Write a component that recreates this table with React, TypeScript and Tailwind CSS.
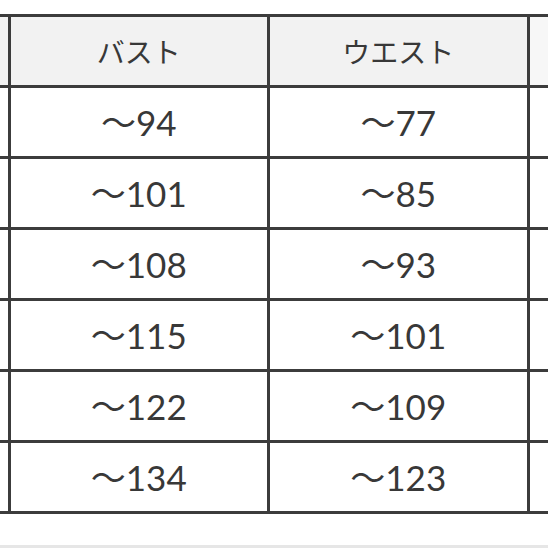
import React from "react";

const rows = [
  ["～94", "～77"],
  ["～101", "～85"],
  ["～108", "～93"],
  ["～115", "～101"],
  ["～122", "～109"],
  ["～134", "～123"],
];

const cell = "h-[71px] border-[3px] border-[#3c3c3c]";

export default function App() {
  return (
    <div
      className="w-[548px] h-[548px] bg-white overflow-hidden flex flex-col text-[#383838]"
      style={{ fontFamily: 'Lato, "Noto Sans CJK JP", sans-serif' }}
    >
      <div className="pt-[14px]">
        <table className="table-fixed border-collapse w-[1038px] -ml-[252px]">
          <colgroup>
            <col className="w-[259.5px]" />
            <col className="w-[259.5px]" />
            <col className="w-[259.5px]" />
            <col className="w-[259.5px]" />
          </colgroup>
          <thead>
            <tr className="bg-[#f2f2f2]">
              <th className={`${cell} font-normal`}></th>
              <th
                className={`${cell} font-normal text-[28px] leading-none`}
                style={{ fontFamily: '"Noto Sans CJK JP", sans-serif' }}
              >
                バスト
              </th>
              <th
                className={`${cell} font-normal text-[28px] leading-none`}
                style={{ fontFamily: '"Noto Sans CJK JP", sans-serif' }}
              >
                ウエスト
              </th>
              <th className={`${cell} font-normal bg-[#f7f7f7]`}></th>
            </tr>
          </thead>
          <tbody>
            {rows.map((r, i) => (
              <tr key={i}>
                <td className={cell}></td>
                <td className={`${cell} text-center text-[35px] leading-none`}>{r[0]}</td>
                <td className={`${cell} text-center text-[35px] leading-none`}>{r[1]}</td>
                <td className={cell}></td>
              </tr>
            ))}
          </tbody>
        </table>
      </div>
      <div className="flex-1" />
      <div className="h-[3px] bg-[#e6e6e6]" />
    </div>
  );
}
